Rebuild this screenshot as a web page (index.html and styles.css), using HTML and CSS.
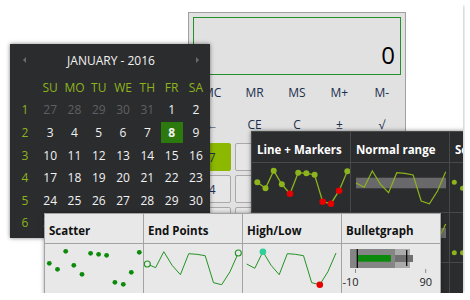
FILE: index.html
```html
<!DOCTYPE html>
<html>
<head>
<meta charset="utf-8">
<link rel="stylesheet" href="styles.css">
</head>
<body>
<div class="card">

  <div class="calc">
    <div class="display">0</div>
    <div class="keys">
      <span class="mem">MC</span><span class="mem">MR</span><span class="mem">MS</span><span class="mem">M+</span><span class="mem">M-</span>
      <span class="mem">←</span><span class="mem">CE</span><span class="mem">C</span><span class="mem">±</span><span class="mem">√</span>
    </div>
    <div class="btns">
      <span class="btn on">7</span><span class="btn">8</span><span class="btn">9</span><span class="btn">/</span><span class="btn">%</span>
      <span class="btn">4</span><span class="btn">5</span><span class="btn">6</span><span class="btn">*</span><span class="btn">1/x</span>
      <span class="btn">1</span><span class="btn">2</span><span class="btn">3</span><span class="btn">-</span><span class="btn">=</span>
    </div>
  </div>

  <div class="cal">
    <div class="cal-head">
      <span class="arr-l"></span>
      <span class="cal-title">JANUARY - 2016</span>
      <span class="arr-r"></span>
    </div>
    <div class="cal-grid">
      <span></span><span class="dh">SU</span><span class="dh">MO</span><span class="dh">TU</span><span class="dh">WE</span><span class="dh">TH</span><span class="dh">FR</span><span class="dh">SA</span>
      <span class="wk">1</span><span class="om">27</span><span class="om">28</span><span class="om">29</span><span class="om">30</span><span class="om">31</span><span>1</span><span>2</span>
      <span class="wk">2</span><span>3</span><span>4</span><span>5</span><span>6</span><span>7</span><span><b class="sel">8</b></span><span>9</span>
      <span class="wk">3</span><span>10</span><span>11</span><span>12</span><span>13</span><span>14</span><span>15</span><span>16</span>
      <span class="wk">4</span><span>17</span><span>18</span><span>19</span><span>20</span><span>21</span><span>22</span><span>23</span>
      <span class="wk">5</span><span>24</span><span>25</span><span>26</span><span>27</span><span>28</span><span>29</span><span>30</span>
      <span class="wk">6</span><span>31</span><span class="om">1</span><span class="om">2</span><span class="om">3</span><span class="om">4</span><span class="om">5</span><span class="om">6</span>
    </div>
  </div>

  <div class="dgrid">
    <div class="th">Line + Markers</div>
    <div class="th">Normal range</div>
    <div class="th">Scatter</div>

    <div>
      <svg width="98" height="49" viewBox="0 0 98 49">
        <polyline points="5.3,19.3 13.5,25.3 21.7,7.7 29.8,21.3 38,30.7 46.2,9.7 54.4,10.3 62.6,11.7 70.7,38.7 78.9,40.7 87.1,27.7 95.3,8.3" fill="none" stroke="#8db41c" stroke-width="1.3"/>
        <g fill="#8db41c">
          <circle cx="5.3" cy="19.3" r="3"/><circle cx="13.5" cy="25.3" r="3"/><circle cx="21.7" cy="7.7" r="3"/><circle cx="29.8" cy="21.3" r="3"/>
          <circle cx="46.2" cy="9.7" r="3"/><circle cx="54.4" cy="10.3" r="3"/><circle cx="62.6" cy="11.7" r="3"/><circle cx="95.3" cy="8.3" r="3"/>
        </g>
        <g fill="#e60000">
          <circle cx="38" cy="30.7" r="3.3"/><circle cx="70.7" cy="38.7" r="3.3"/><circle cx="78.9" cy="40.7" r="3.3"/><circle cx="87.1" cy="27.7" r="3.3"/>
        </g>
      </svg>
    </div>
    <div>
      <svg width="98" height="49" viewBox="0 0 98 49">
        <rect x="5" y="14.7" width="90" height="10.6" fill="#69696b"/>
        <polyline points="5,20 13.2,24.3 21.3,8 29.5,21.3 37.6,29.7 45.8,9.7 53.9,10.3 62.1,12 70.2,38 78.4,40.7 86.5,28 94.7,8.7" fill="none" stroke="#8db41c" stroke-width="1.2"/>
      </svg>
    </div>
    <div>
      <svg width="98" height="49" viewBox="0 0 98 49">
        <g fill="#8db41c">
          <circle cx="4.3" cy="19.3" r="2.5"/><circle cx="12.5" cy="25.3" r="2.5"/><circle cx="20.7" cy="7.7" r="2.5"/><circle cx="28.8" cy="21.3" r="2.5"/>
          <circle cx="37" cy="30.7" r="2.5"/><circle cx="45.2" cy="9.7" r="2.5"/><circle cx="53.4" cy="10.3" r="2.5"/><circle cx="61.6" cy="11.7" r="2.5"/>
          <circle cx="69.7" cy="38.7" r="2.5"/><circle cx="77.9" cy="40.7" r="2.5"/><circle cx="86.1" cy="27.7" r="2.5"/><circle cx="94.3" cy="8.3" r="2.5"/>
        </g>
      </svg>
    </div>

    <div></div>
    <div>
      <svg width="98" height="49" viewBox="0 0 98 49">
        <rect x="5" y="15" width="90" height="10" fill="#69696b"/>
        <polyline points="5,39.7 13.2,39.7 21.3,25 29.5,12 37.6,30 45.8,18 53.9,8 62.1,22 70.2,35 78.4,15 86.5,28 94.7,11" fill="none" stroke="#8db41c" stroke-width="1.2"/>
      </svg>
    </div>
    <div>
      <svg width="98" height="49" viewBox="0 0 98 49">
        <g fill="#8db41c">
          <circle cx="4.3" cy="39.7" r="2.5"/><circle cx="12.5" cy="39.7" r="2.5"/><circle cx="20.7" cy="25" r="2.5"/><circle cx="28.8" cy="12" r="2.5"/>
        </g>
      </svg>
    </div>

    <div></div><div></div><div></div>
  </div>

  <div class="lgrid">
    <div class="th">Scatter</div>
    <div class="th">End Points</div>
    <div class="th">High/Low</div>
    <div class="th">Bulletgraph</div>

    <div>
      <svg width="98" height="50" viewBox="0 0 98 50">
        <g fill="#0b8a0b">
          <circle cx="4.3" cy="19.3" r="2.4"/><circle cx="12.5" cy="25.3" r="2.4"/><circle cx="20.7" cy="7.3" r="2.4"/><circle cx="28.8" cy="21.3" r="2.4"/>
          <circle cx="37" cy="30.3" r="2.4"/><circle cx="45.6" cy="9.3" r="2.4"/><circle cx="53.6" cy="10.3" r="2.4"/><circle cx="61.6" cy="11.3" r="2.4"/>
          <circle cx="69.9" cy="38.3" r="2.4"/><circle cx="78.3" cy="40.3" r="2.4"/><circle cx="86.3" cy="28.3" r="2.4"/><circle cx="94.3" cy="8.3" r="2.4"/>
        </g>
      </svg>
    </div>
    <div>
      <svg width="98" height="50" viewBox="0 0 98 50">
        <polyline points="3.3,20 11.6,23.7 19.8,7.7 28.1,21.3 36.4,30.7 44.7,9.7 52.9,10.3 61.2,11.7 69.5,38.7 77.7,40.7 86,27.7 94.3,9" fill="none" stroke="#239323" stroke-width="1"/>
        <circle cx="3.3" cy="20" r="3" fill="#e8e8e8" stroke="#239323" stroke-width="1.1"/>
        <circle cx="94.3" cy="9" r="3" fill="#e8e8e8" stroke="#239323" stroke-width="1.1"/>
      </svg>
    </div>
    <div>
      <svg width="98" height="50" viewBox="0 0 98 50">
        <polyline points="3.7,20 11.8,24.3 19.9,7.7 28.1,21.3 36.2,30.7 44.3,9.7 52.4,10.3 60.5,11.7 68.7,38.7 76.8,40.7 84.9,27.7 93,9" fill="none" stroke="#239323" stroke-width="1"/>
        <circle cx="19.9" cy="7.7" r="3.3" fill="#2fd09a"/>
        <circle cx="76.8" cy="40.7" r="3.3" fill="#e60000"/>
      </svg>
    </div>
    <div>
      <svg width="98" height="50" viewBox="0 0 98 50">
        <rect x="8" y="5" width="45" height="19" fill="#858585"/>
        <rect x="53" y="5" width="15" height="19" fill="#ababab"/>
        <rect x="53" y="11" width="18" height="7" fill="#707070"/>
        <rect x="15.3" y="11" width="33.7" height="6.7" fill="#0b8a0b"/>
        <line x1="15.3" y1="5" x2="15.3" y2="24" stroke="#000" stroke-width="1.2"/>
        <line x1="64.7" y1="6" x2="64.7" y2="22" stroke="#000" stroke-width="1.2"/>
        <line x1="13.5" y1="25" x2="13.5" y2="29" stroke="#8a8a8a" stroke-width="1"/>
        <line x1="83.7" y1="25" x2="83.7" y2="29" stroke="#8a8a8a" stroke-width="1"/>
        <text x="16.5" y="42" text-anchor="end" class="ax">-10</text>
        <text x="83.7" y="42" text-anchor="middle" class="ax">90</text>
      </svg>
    </div>
  </div>

</div>
</body>
</html>
```

FILE: styles.css
```css
* { box-sizing: border-box; }

body {
  margin: 5px;
  background: #ffffff;
  font-family: "Open Sans", "Noto Sans", sans-serif;
}

.card {
  position: relative;
  width: 458px;
  height: 288px;
  background: #ffffff;
  box-shadow: 0 0 4px rgba(0, 0, 0, 0.35);
  overflow: hidden;
}

/* ---------- Calculator ---------- */
.calc {
  position: absolute;
  left: 183px;
  top: 7px;
  width: 218px;
  height: 300px;
  background: #e1e1e1;
  border: 1px solid #a0a0a0;
  padding: 4px;
}

.display {
  height: 58px;
  border: 1px solid #23902a;
  display: flex;
  justify-content: flex-end;
  align-items: flex-end;
  padding: 0 5px 7px;
  font-size: 24px;
  line-height: 24px;
  color: #000;
}

.keys {
  display: grid;
  grid-template-columns: repeat(5, 1fr);
  column-gap: 4px;
  margin-top: 2px;
}

.mem {
  height: 32px;
  line-height: 32px;
  text-align: center;
  font-size: 12px;
  color: #1c2e4e;
}

.btns {
  display: grid;
  grid-template-columns: repeat(5, 1fr);
  gap: 4px;
  margin-top: 2px;
}

.btn {
  height: 28px;
  border: 1px solid #a9a9a9;
  border-radius: 2px;
  background: #e6e6e6;
  display: flex;
  align-items: center;
  justify-content: center;
  font-size: 12px;
  color: #1c2e4e;
}

.btn.on {
  background: #8cb800;
  border-color: #8cb800;
}

/* ---------- Calendar ---------- */
.cal {
  position: absolute;
  left: 5px;
  top: 39px;
  width: 200px;
  height: 194px;
  background: #2b2c2e;
  box-shadow: 0 0 4px rgba(0, 0, 0, 0.5);
  color: #f2f2f2;
  font-size: 12px;
}

.cal-head {
  height: 32px;
  display: flex;
  align-items: center;
  justify-content: space-between;
  padding: 0 11px 0 13px;
}

.arr-l {
  width: 0;
  height: 0;
  border-top: 3px solid transparent;
  border-bottom: 3px solid transparent;
  border-right: 3px solid #6b6b6b;
}

.arr-r {
  width: 0;
  height: 0;
  border-top: 3px solid transparent;
  border-bottom: 3px solid transparent;
  border-left: 3px solid #6b6b6b;
}

.cal-grid {
  display: grid;
  grid-template-columns: 26px repeat(7, 24.3px);
  grid-auto-rows: 22.6px;
  padding-left: 2px;
}

.cal-grid > span {
  display: flex;
  align-items: center;
  justify-content: center;
}

.dh, .wk { color: #8db41c; }
.om { color: #5f6062; }

.sel {
  width: 22px;
  height: 21px;
  display: flex;
  align-items: center;
  justify-content: center;
  background: #2c7a0e;
  font-weight: 700;
}

/* ---------- Dark sparkline grid ---------- */
.dgrid {
  position: absolute;
  left: 246px;
  top: 126px;
  display: grid;
  grid-template-columns: repeat(3, 98px);
  grid-template-rows: 30px 49px 49px 49px;
  gap: 1px;
  background: #48494b;
  border: 1px solid #48494b;
  box-shadow: 0 0 4px rgba(0, 0, 0, 0.5);
}

.dgrid > div { background: #2b2c2e; overflow: hidden; }

.dgrid .th {
  color: #ffffff;
  font-weight: 700;
  font-size: 11.5px;
  padding: 4px 0 0 5px;
  display: flex;
  align-items: center;
  white-space: nowrap;
}

svg { display: block; }

/* ---------- Light sparkline grid ---------- */
.lgrid {
  position: absolute;
  left: 39px;
  top: 208px;
  display: grid;
  grid-template-columns: repeat(4, 98px);
  grid-template-rows: 29px 50px;
  gap: 1px;
  background: #a3a3a3;
  border: 1px solid #a3a3a3;
  box-shadow: 0 0 4px rgba(0, 0, 0, 0.35);
}

.lgrid > div { background: #e8e8e8; overflow: hidden; }

.lgrid .th {
  color: #111;
  font-weight: 700;
  font-size: 11.5px;
  padding: 3px 0 0 4px;
  display: flex;
  align-items: center;
  white-space: nowrap;
}

.ax {
  font-family: "Open Sans", "Noto Sans", sans-serif;
  font-size: 11px;
  fill: #222;
}
```
